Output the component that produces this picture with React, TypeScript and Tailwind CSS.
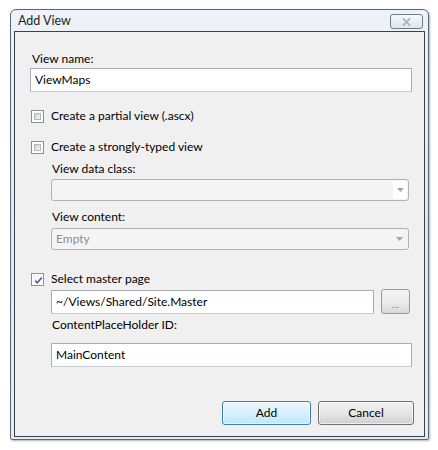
import React from "react";

function CheckBox({ checked }: { checked?: boolean }) {
  return (
    <div className="w-[13px] h-[13px] shrink-0 border border-[#8e8f8f] bg-white p-[1px]">
      {checked ? (
        <div className="w-full h-full bg-gradient-to-br from-[#f0f3f8] to-white relative">
          <svg width="11" height="11" viewBox="0 0 11 11" className="absolute left-0 top-0">
            <path d="M2.2 5.6 L4.3 7.8 L8.8 2.4" fill="none" stroke="#4a5f8f" strokeWidth="1.6" />
          </svg>
        </div>
      ) : (
        <div className="w-full h-full p-[1px] bg-white">
          <div className="w-full h-full border border-[#b3b8bf] bg-gradient-to-br from-[#cdd1d7] to-[#f4f5f6]" />
        </div>
      )}
    </div>
  );
}

function TextBox({ value, className }: { value: string; className: string }) {
  return (
    <div
      className={
        "h-[24px] border border-[#a9aeb6] border-b-[#c9ced5] bg-white flex items-center pl-[4px] text-black " +
        className
      }
    >
      {value}
    </div>
  );
}

function Arrow() {
  return (
    <svg width="7" height="4" viewBox="0 0 7 4">
      <path d="M0 0 L7 0 L3.5 4 Z" fill="#a6a6a6" />
    </svg>
  );
}

export default function App() {
  return (
    <div className="w-[438px] h-[450px] bg-white pt-[9px] pl-[10px] font-['Lato','Segoe_UI',sans-serif] text-[12px] leading-4 text-black">
      <div className="w-[419px] h-[431px] rounded-t-[6px] rounded-b-[2px] border border-[#5b6671] bg-gradient-to-b from-[#eef3f9] via-[#dfe8f3] to-[#e6edf6] px-[3px] pb-[2px] flex flex-col shadow-[1px_1px_2px_rgba(0,0,0,0.3)]">
        <div className="h-[21px] shrink-0 flex items-start justify-between">
          <div className="pl-[4px] pt-[3px] text-[12.5px] text-[#1e1e1e]">Add View</div>
          <div className="mt-[4px] mr-[2px] w-[33px] h-[15px] rounded-[3px] border border-[#6f7c89] bg-gradient-to-b from-[#f7f9fc] to-[#dfe6ee] flex items-center justify-center">
            <svg width="9" height="8" viewBox="0 0 9 8">
              <path d="M1 0.5 L8 7.5 M8 0.5 L1 7.5" stroke="#8a949e" strokeWidth="1.6" fill="none" />
              <path d="M1 0.5 L8 7.5 M8 0.5 L1 7.5" stroke="#ffffff" strokeWidth="0.5" fill="none" />
            </svg>
          </div>
        </div>
        <div className="flex-1 border border-[#36424d] bg-[#f0f0f0] flex flex-col pl-[15px]">
          <div className="mt-[19px] h-4 pl-[2px]">View name:</div>
          <TextBox value="ViewMaps" className="mt-[1px] w-[382px]" />

          <div className="mt-[16px] h-4 flex items-center pl-[1px] gap-[7px]">
            <CheckBox />
            <span>Create a partial view (.ascx)</span>
          </div>
          <div className="mt-[15px] h-4 flex items-center pl-[1px] gap-[7px]">
            <CheckBox />
            <span>Create a strongly-typed view</span>
          </div>

          <div className="pl-[21px] flex flex-col">
            <div className="mt-[6px] h-4 pl-[1px]">View data class:</div>
            <div className="mt-[2px] w-[358px] h-[22px] rounded-[3px] border border-[#adb2b5] bg-[#f4f4f4] flex items-center justify-end p-[1px]">
              <div className="w-[14px] h-full bg-white flex items-center justify-center rounded-r-[2px]">
                <Arrow />
              </div>
            </div>
            <div className="mt-[8px] h-4 pl-[1px]">View content:</div>
            <div className="mt-[3px] w-[358px] h-[22px] rounded-[3px] border border-[#adb2b5] bg-[#f4f4f4] flex items-center justify-between pl-[4px] pr-[5px] text-[#8d8d8d]">
              <span>Empty</span>
              <Arrow />
            </div>
          </div>

          <div className="mt-[21px] h-4 flex items-center pl-[1px] gap-[7px]">
            <CheckBox checked />
            <span>Select master page</span>
          </div>

          <div className="pl-[21px] flex flex-col">
            <div className="mt-[3px] flex items-center gap-[7px]">
              <TextBox value="~/Views/Shared/Site.Master" className="w-[323px]" />
              <div className="w-[29px] h-[25px] -mt-[1px] rounded-[3px] border border-[#9a9a9a] bg-gradient-to-b from-[#f4f4f4] via-[#ececec] to-[#d8d8d8] flex items-end justify-center pb-[5px]">
                <span className="text-[9px] leading-[6px] text-[#7a7a7a] tracking-[0.5px]">...</span>
              </div>
            </div>
            <div className="mt-[3px] h-4 pl-[1px]">ContentPlaceHolder ID:</div>
            <TextBox value="MainContent" className="mt-[10px] w-[361px]" />
          </div>

          <div className="mt-[34px] flex justify-end gap-[7px] pr-[10px]">
            <div className="w-[89px] h-[24px] rounded-[3px] border border-[#3c7fb1] bg-gradient-to-b from-[#eaf6fd] via-[#d9f0fc] to-[#bee6fd] shadow-[inset_0_0_0_1px_rgba(255,255,255,0.6)] flex items-center justify-center">
              Add
            </div>
            <div className="w-[96px] h-[24px] rounded-[3px] border border-[#707070] bg-gradient-to-b from-[#f2f2f2] via-[#e6e6e6] to-[#d0d0d0] shadow-[inset_0_0_0_1px_rgba(255,255,255,0.6)] flex items-center justify-center">
              Cancel
            </div>
          </div>
        </div>
      </div>
    </div>
  );
}
